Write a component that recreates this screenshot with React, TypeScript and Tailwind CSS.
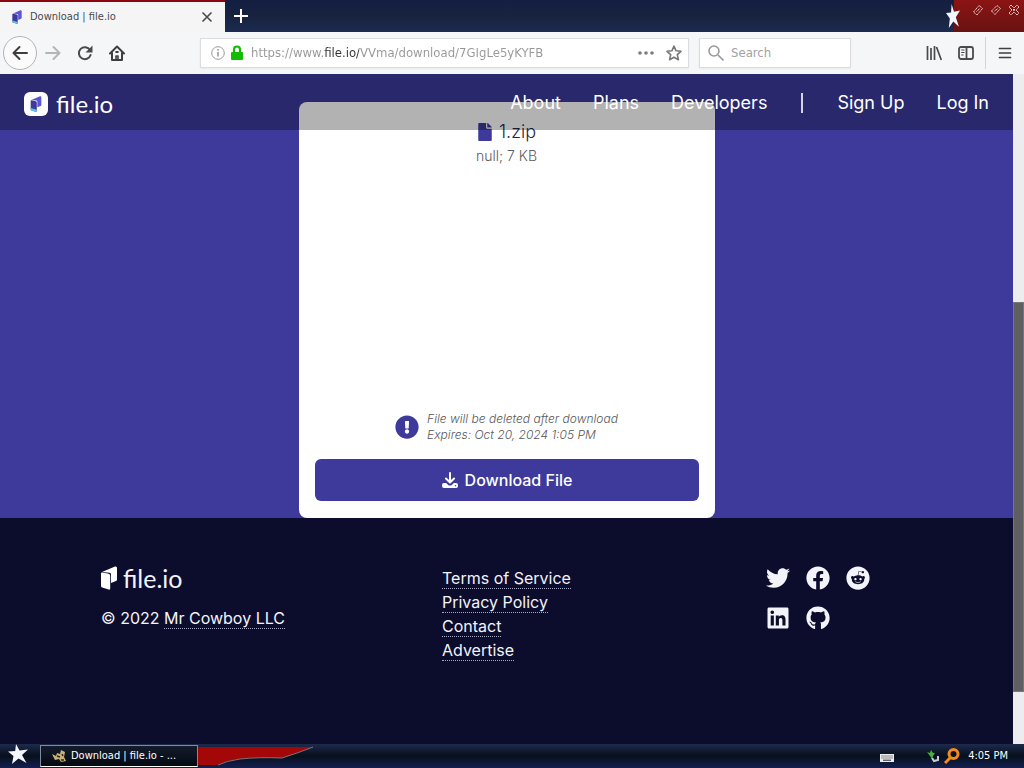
import React from 'react';
import { FaTwitter, FaFacebook, FaReddit, FaLinkedin, FaGithub, FaFile, FaExclamationCircle } from 'react-icons/fa';

function Mark({ className, mono = false }: { className: string; mono?: boolean }) {
  return (
    <svg viewBox="0 0 16 24" className={className} aria-hidden="true">
      <path d="M1 6 L14 0.5 Q16 0 16 2 V13.5 Q16 14.5 15 15 L10 17 V8.5 Q10 7 8.5 6.7 Z" fill={mono ? '#ffffff' : '#5b55d8'} />
      <path d="M0 7.5 Q0 6.2 1.4 6.5 L7.8 7.8 Q9.2 8.2 9.2 9.6 V22.5 Q9.2 24 7.6 23.5 L1.2 21.6 Q0 21.2 0 20 Z" fill={mono ? '#ffffff' : '#3d3a9b'} />
      {!mono && <path d="M0 18 L9.2 20.5 V22.5 Q9.2 24 7.6 23.5 L1.2 21.6 Q0 21.2 0 20 Z" fill="#5cc4e8" />}
    </svg>
  );
}

function Star({ className }: { className: string }) {
  return (
    <svg viewBox="0 0 20 20" preserveAspectRatio="none" className={className} aria-hidden="true">
      <path d="M8 0 L11.5 6.5 L20 5.5 L14 11 L18.5 19 L10.5 14.5 L4 20 L5.5 12 L0 7.5 L7.2 7 Z" fill="#f4f6ff" />
    </svg>
  );
}

function TitleBar() {
  return (
    <div className="flex h-8 bg-linear-to-b from-[#141e42] via-[#18233f] to-[#1c2a50]">
      <div className="flex h-8 w-[225px] items-center border-t-2 border-[#8c0612] bg-[#f5f5f6] pl-3 pr-3">
        <Mark className="h-3.5 w-2.5" />
        <span className="ml-2 flex-1 text-[11px] text-[#4a4a4c]">Download | file.io</span>
        <button aria-label="Close tab">
          <svg viewBox="0 0 12 12" className="size-3" stroke="#4a4a4c" strokeWidth="1.6" fill="none"><path d="M1.5 1.5 L10.5 10.5 M10.5 1.5 L1.5 10.5" /></svg>
        </button>
      </div>
      <button aria-label="New tab" className="flex w-8 items-center justify-center">
        <svg viewBox="0 0 16 16" className="size-4" stroke="#ffffff" strokeWidth="2"><path d="M8 1 V15 M1 8 H15" /></svg>
      </button>
      <div className="flex-1" />
      <Star className="z-10 -mr-1.5 mt-1 h-6 w-3.5" />
      <div className="flex w-[70px] items-start justify-end gap-1.5 bg-linear-to-b from-[#8c1414] to-[#681212] pr-1 pt-1">
        <button aria-label="Minimize">
          <svg viewBox="0 0 12 12" className="size-3" fill="none" stroke="#f3d6cf"><path d="M1.5 8 L7 1.5 L10.5 4.5 L5 11 Z M4.5 7.5 L8 4.5" strokeDasharray="1.5 .5" /></svg>
        </button>
        <button aria-label="Maximize">
          <svg viewBox="0 0 12 12" className="size-3" fill="none" stroke="#f3d6cf"><path d="M1.5 7 L7 1.5 L10.5 4.5 L5 10.5 Z M4.5 7 L8 4.5" strokeDasharray="1.5 .5" /></svg>
        </button>
        <button aria-label="Close window">
          <svg viewBox="0 0 12 12" className="size-3" fill="none" stroke="#f3d6cf"><path d="M3 1 L6 4 L9 1 L11 3 L8 6 L11 9 L9 11 L6 8 L3 11 L1 9 L4 6 L1 3 Z M5 5 L7 7 M7 5 L5 7" strokeDasharray="1.5 .4" /></svg>
        </button>
      </div>
    </div>
  );
}

function Toolbar() {
  return (
    <div className="flex h-[42px] items-center bg-[#f5f6f7] pl-[3px] pr-3">
      <button aria-label="Back" className="flex size-[34px] items-center justify-center rounded-full border border-[#b4b4b6] bg-[#fbfbfb]">
        <svg viewBox="0 0 16 16" className="size-4" fill="none" stroke="#3e3e40" strokeWidth="2" strokeLinecap="round" strokeLinejoin="round"><path d="M15 8 H1.5 M7.5 2 L1.5 8 L7.5 14" /></svg>
      </button>
      <button aria-label="Forward" className="ml-2">
        <svg viewBox="0 0 16 16" className="size-4" fill="none" stroke="#b5b5b7" strokeWidth="2" strokeLinecap="round" strokeLinejoin="round"><path d="M1 8 H14.5 M8.5 2 L14.5 8 L8.5 14" /></svg>
      </button>
      <button aria-label="Reload" className="ml-4">
        <svg viewBox="0 0 16 16" className="size-4" fill="none" stroke="#4a4a4c" strokeWidth="2"><path d="M13 5 A6 6 0 1 0 13.6 10" strokeLinecap="round" /><path d="M15.5 0.5 V7.5 H8.5 Z" fill="#4a4a4c" stroke="none" /></svg>
      </button>
      <button aria-label="Home" className="ml-4">
        <svg viewBox="0 0 16 16" className="size-4" fill="none" stroke="#3e3e40" strokeWidth="2" strokeLinecap="round" strokeLinejoin="round"><path d="M1 8.5 L8 1.5 L15 8.5 M3 8 V15 H13 V8" /><path d="M7 15 V11 H9 V15" strokeWidth="1.6" /><path d="M7.2 7 H8.8" /></svg>
      </button>
      <div className="ml-[75px] flex h-[30px] flex-1 items-center border border-[#dcdcde] bg-white pl-2.5 pr-1.5 shadow-xs">
        <svg viewBox="0 0 14 14" className="size-3.5" fill="none" stroke="#9a9a9c"><circle cx="7" cy="7" r="6.3" /><path d="M7 6 V10.5 M7 3 V4.6" strokeWidth="1.6" /></svg>
        <svg viewBox="0 0 14 16" className="ml-[5px] h-4 w-3.5" aria-hidden="true"><rect x="1" y="7" width="12" height="8" rx="1" fill="#12bc00" /><path d="M4 8 V4.5 A3 3 0 0 1 10 4.5 V8" fill="none" stroke="#12bc00" strokeWidth="2.2" /></svg>
        <input
          aria-label="Address"
          defaultValue="https://www.file.io/VVma/download/7GIgLe5yKYFB"
          className="ml-[7px] min-w-0 flex-1 bg-[linear-gradient(to_right,#97979a_0_73px,#333333_73px_108px,#97979a_108px)] bg-clip-text text-[13px] text-transparent outline-none"
        />
        <button aria-label="Page actions"><svg viewBox="0 0 16 4" className="h-1 w-4" fill="#7c7c7e"><circle cx="2" cy="2" r="1.8" /><circle cx="8" cy="2" r="1.8" /><circle cx="14" cy="2" r="1.8" /></svg></button>
        <button aria-label="Bookmark" className="ml-3"><svg viewBox="0 0 16 16" className="size-4" fill="none" stroke="#78787a" strokeWidth="1.6" strokeLinejoin="round"><path d="M8 1.2 L10.1 5.8 L15 6.3 L11.3 9.7 L12.4 14.7 L8 12.2 L3.6 14.7 L4.7 9.7 L1 6.3 L5.9 5.8 Z" /></svg></button>
      </div>
      <div className="ml-2.5 flex h-[30px] w-[152px] items-center border border-[#dcdcde] bg-white pl-2 shadow-xs">
        <svg viewBox="0 0 16 16" className="size-4" fill="none" stroke="#9a9a9c" strokeWidth="1.6"><circle cx="6" cy="6" r="5" /><path d="M10 10 L15.5 15.5" /></svg>
        <input aria-label="Search" placeholder="Search" className="ml-[7px] w-28 text-[13px] outline-none placeholder:text-[#a2a2a4]" />
      </div>
      <button aria-label="Library" className="ml-[75px]"><svg viewBox="0 0 16 16" className="size-4" fill="none" stroke="#4a4a4c" strokeWidth="1.7"><path d="M1.5 1 V15 M5 3 V15 M8.5 1 V15 M10.5 2 L15.3 15" /></svg></button>
      <button aria-label="Sidebars" className="ml-4"><svg viewBox="0 0 16 16" className="size-4" fill="none" stroke="#4a4a4c" strokeWidth="1.8"><rect x="1" y="2" width="14" height="12" rx="2" /><path d="M8.5 2 V14" /><path d="M3.2 5 H6.5 M3.2 7.5 H6.5 M3.2 10 H5.5" strokeWidth="1" /></svg></button>
      <span className="ml-[11px] h-8 w-px bg-[#d5d5d8]" />
      <button aria-label="Menu" className="ml-3"><svg viewBox="0 0 14 14" className="size-3.5" stroke="#3e3e40" strokeWidth="1.7" strokeLinecap="round"><path d="M1.5 2.5 H12.5 M1.5 7 H12.5 M1.5 11.5 H12.5" /></svg></button>
    </div>
  );
}

function SiteHeader() {
  return (
    <header className="absolute inset-x-0 top-0 flex h-14 items-center bg-black/30 pl-6 pr-6 text-white">
      <a href="#home" className="mt-1 flex flex-1 items-center gap-2">
        <span className="flex size-6 items-center justify-center rounded-md bg-white"><Mark className="h-4 w-3" /></span>
        <span className="font-[Lato,sans-serif] text-[24px] leading-6">file.io</span>
      </a>
      <nav className="flex items-center gap-8 pt-px font-[Inter,sans-serif] text-[18px]">
        <a href="#about">About</a>
        <a href="#plans">Plans</a>
        <a href="#developers">Developers</a>
        <span className="mx-0.5 h-5 w-0.5 bg-white/80" />
        <a href="#signup">Sign Up</a>
        <a href="#login">Log In</a>
      </nav>
    </header>
  );
}

function DownloadCard() {
  return (
    <section className="flex h-[416px] w-[416px] flex-col items-center rounded-lg bg-white px-4 pb-[17px] pt-4">
      <h1 className="flex items-center gap-1.5 text-[18px] font-light leading-7 text-[#26264c]">
        <FaFile className="h-[18px] w-4 text-[#3d3a9b]" />
        1.zip
      </h1>
      <p className="text-[14px] font-light leading-5 text-[#5c5c5e]">null; 7 KB</p>
      <div className="mt-auto flex items-center gap-2">
        <FaExclamationCircle className="size-6 text-[#3d3a9b]" />
        <p className="text-[12px] font-light italic leading-4 text-[#58585a]">
          File will be deleted after download
          <br />
          Expires: Oct 20, 2024 1:05 PM
        </p>
      </div>
      <button className="mt-4 flex h-[42px] w-full items-center justify-center gap-1.5 rounded-md bg-[#3d3a9b] text-[16px] font-medium text-white">
        <svg viewBox="0 0 18 18" className="size-[18px]" fill="none" stroke="#ffffff" strokeWidth="2" strokeLinecap="round" strokeLinejoin="round" aria-hidden="true">
          <path d="M9 2 V11 M5 7.5 L9 11.5 L13 7.5" />
          <path d="M3 12 H5.2 L7.4 14.2 Q9 15 10.6 14.2 L12.8 12 H15 Q17 12 17 14 V15 Q17 17 15 17 H3 Q1 17 1 15 V14 Q1 12 3 12 Z" fill="#ffffff" stroke="none" />
          <circle cx="14.5" cy="14.7" r=".7" fill="#3d3a9b" stroke="none" />
        </svg>
        Download File
      </button>
    </section>
  );
}

const links = ['Terms of Service', 'Privacy Policy', 'Contact', 'Advertise'];
const underline = 'border-b border-dotted border-[#a9a9c4]';

function SiteFooter() {
  return (
    <footer className="grid flex-1 grid-cols-[341fr_324fr_146fr] items-start bg-[#0c0c2d] px-[101px] pb-12 pt-12 text-[16px] text-[#f3f3fa]">
      <div>
        <div className="flex items-center gap-1.5">
          <Mark mono className="h-6 w-4" />
          <span className="font-[Lato,sans-serif] text-[25px] leading-6">file.io</span>
        </div>
        <p className="mt-4 leading-6">© 2022 <a href="#company" className={underline}>Mr Cowboy LLC</a></p>
      </div>
      <ul>
        {links.map((l) => (
          <li key={l} className="leading-6"><a href="#footer" className={underline}>{l}</a></li>
        ))}
      </ul>
      <div className="grid grid-cols-[24px_24px_24px] gap-4">
        <a href="#twitter" aria-label="Twitter"><FaTwitter className="size-6" /></a>
        <a href="#facebook" aria-label="Facebook"><FaFacebook className="size-6" /></a>
        <a href="#reddit" aria-label="Reddit"><FaReddit className="size-6" /></a>
        <a href="#linkedin" aria-label="LinkedIn"><FaLinkedin className="size-6" /></a>
        <a href="#github" aria-label="GitHub"><FaGithub className="size-6" /></a>
      </div>
    </footer>
  );
}

function Taskbar() {
  return (
    <div className="flex h-6 items-center bg-linear-to-b from-[#1d2a4c] via-[#08101c] to-[#141f52] text-[11px] text-white">
      <button aria-label="Start" className="w-10 pb-1 pl-2"><Star className="h-5 w-5" /></button>
      <button className="flex h-[22px] w-[158px] items-center gap-1 border border-[#7f8ba3] border-b-white bg-linear-to-b from-[#141c2c] to-[#050a12] pl-2.5">
        <svg viewBox="0 0 16 16" className="size-4" aria-hidden="true"><path d="M1 6 L5 8 L6 5 L9 6 L10 2 L14 4 L13 9 L15 13 L10 14 L8 11 L4 12 Z" fill="#c9b27a" /><path d="M6 8 L9 9 M11 6 L12 8 M10 12 H13" stroke="#2b2415" strokeWidth="1.5" /></svg>
        Download | file.io - ...
      </button>
      <svg viewBox="0 0 120 22" className="h-[22px] w-[120px]" aria-hidden="true"><path d="M0 2 H115 Q100 8 84 13 Q60 12 42 14 Q28 16 20 20 H0 Z" fill="#a30708" /><path d="M115 2 Q100 8 84 13 Q60 12 42 14 Q28 16 20 20" fill="none" stroke="#77737d" /></svg>
      <div className="flex-1" />
      <svg viewBox="0 0 14 8" className="mr-8 mt-1 h-2 w-3.5" aria-hidden="true"><rect width="14" height="8" fill="#eeeeee" /><path d="M1.5 2 H13 M1.5 4 H13" stroke="#222222" strokeDasharray="1 1" /><path d="M3 6.2 H11" stroke="#222222" /></svg>
      <svg viewBox="0 0 14 14" className="size-3.5" aria-hidden="true"><path d="M1 3 L4 4 L5 1 L7 4 L9 4 L7 7 L6 10 L4 7 Z" fill="#46b436" /><path d="M6 9 L8 12 L12 11 L12 7" fill="none" stroke="#c9cbd8" strokeWidth="2" /></svg>
      <svg viewBox="0 0 16 16" className="ml-1 size-4" fill="none" stroke="#f28a1c" aria-hidden="true"><circle cx="9.5" cy="6" r="4.5" strokeWidth="3" /><path d="M6 10 L1 15" strokeWidth="3" /></svg>
      <span className="ml-2 mr-4">4:05 PM</span>
    </div>
  );
}

export default function App() {
  return (
    <div className="flex min-h-screen flex-col font-['DejaVu_Sans_Condensed','DejaVu_Sans',sans-serif]">
      <TitleBar />
      <Toolbar />
      <div className="flex flex-1">
        <div className="relative flex flex-1 flex-col font-[Inter,sans-serif]">
          <main className="flex justify-center bg-[#3d3a9b] pt-7">
            <DownloadCard />
          </main>
          <SiteFooter />
          <SiteHeader />
        </div>
        <div className="flex w-[11px] flex-col bg-[#ededef]">
          <div className="grow-[229]" />
          <div className="grow-[389] border border-[#77777a] bg-[#5f5f62]" />
          <div className="grow-[52]" />
        </div>
      </div>
      <Taskbar />
    </div>
  );
}
